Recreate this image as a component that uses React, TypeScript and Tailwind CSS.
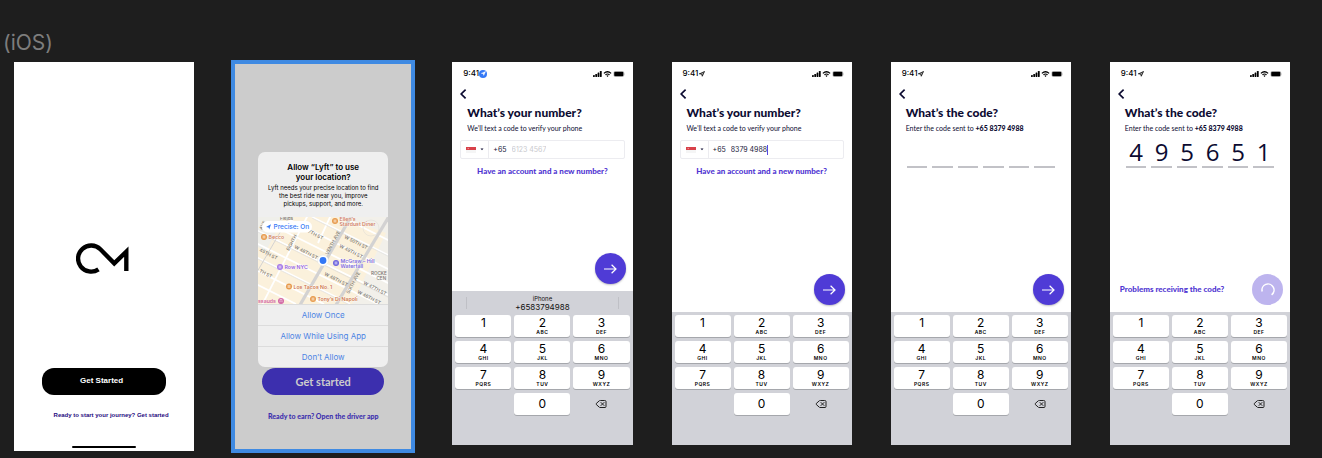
import type { ReactNode } from "react";
import { Delete, Navigation } from "lucide-react";

const INTER = "font-['Inter','Liberation_Sans',sans-serif]";
const LATO = "font-['Lato','Liberation_Sans',sans-serif]";
const OPEN = "font-['Open_Sans','Liberation_Sans',sans-serif]";
const ARIAL = "font-['Liberation_Sans',sans-serif]";

function Logo() {
  return (
    <svg viewBox="0 0 158 92" className="h-[31px] w-[53px]" role="img" aria-label="CM">
      <path
        d="M67 78.5 A39 39 0 1 1 72.6 18.4 L114 60.5 L150 25.5 V83"
        fill="none"
        stroke="#000"
        strokeWidth="13"
        strokeLinejoin="miter"
      />
    </svg>
  );
}

function StatusIcons() {
  return (
    <svg viewBox="0 0 32 6" className="h-[6px] w-[32px]" aria-hidden="true">
      <rect x="0" y="4" width="1.8" height="1.9" rx=".4" />
      <rect x="2.3" y="3" width="1.8" height="2.9" rx=".4" />
      <rect x="4.6" y="1.6" width="1.8" height="4.3" rx=".4" />
      <rect x="6.9" y=".1" width="1.8" height="5.8" rx=".4" />
      <path d="M10.9 2.4 Q14.5 -1 18.1 2.4" fill="none" stroke="#000" strokeWidth="1.3" />
      <path d="M12.4 3.9 Q14.5 2 16.6 3.9" fill="none" stroke="#000" strokeWidth="1.1" />
      <path d="M13.4 4.8 Q14.5 3.9 15.6 4.8 L14.5 6 Z" />
      <rect x="20.8" y=".3" width="10" height="5.4" rx="1.5" fill="none" stroke="#999" strokeWidth=".5" />
      <rect x="21.2" y=".7" width="9.2" height="4.6" rx="1" />
      <path d="M31.2 2.1 Q32 3 31.2 3.9 Z" fill="#999" />
    </svg>
  );
}

function StatusBar({ active }: { active?: boolean }) {
  return (
    <div className={`mt-[7px] flex h-[9px] items-center justify-between pr-[8px] pl-[11px] ${INTER}`}>
      <div className="flex items-center text-[8px] leading-[9px] font-medium text-black">
        9:41
        {active ? (
          <span className="flex size-[8px] items-center justify-center rounded-full bg-[#3478f6]">
            <Navigation className="size-[5px] fill-white text-white" />
          </span>
        ) : (
          <Navigation className="ml-px size-[6px] fill-neutral-400" strokeWidth={3} />
        )}
      </div>
      <StatusIcons />
    </div>
  );
}

function BackButton() {
  return (
    <button type="button" aria-label="Back" className="mt-[11px] ml-[8px] h-[10px] w-[7px]">
      <svg viewBox="0 0 7 10" className="h-[10px] w-[7px]">
        <path d="M5.6 .7 L1.2 5 L5.6 9.3" fill="none" stroke="#0c0b31" strokeWidth="1.7" />
      </svg>
    </button>
  );
}

type Key = [string, string];
const KEYS: Key[] = [
  ["1", ""],
  ["2", "ABC"],
  ["3", "DEF"],
  ["4", "GHI"],
  ["5", "JKL"],
  ["6", "MNO"],
  ["7", "PQRS"],
  ["8", "TUV"],
  ["9", "WXYZ"],
];
const KEY = "flex h-[22px] flex-col items-center rounded-[3px] bg-white text-black shadow-[0_1px_0_#a5a7ac]";

function Keypad({ suggestion }: { suggestion?: boolean }) {
  return (
    <div className={`bg-[#d1d2d8] pb-[27px] ${INTER}`}>
      {suggestion && (
        <div className="flex h-[21px] items-center justify-between px-[14px] pt-[3px]">
          <span className="h-[12px] w-px bg-[#bfc0c6]" />
          <button type="button" className="flex flex-col items-center text-[#111]">
            <span className="text-[6px] leading-[8px]">iPhone</span>
            <span className="text-[8px] leading-[9px]">+6583794988</span>
          </button>
          <span className="h-[12px] w-px bg-[#bfc0c6]" />
        </div>
      )}
      <div className="grid grid-cols-3 gap-x-[3px] gap-y-[4px] p-[3px]">
        {KEYS.map(([digit, letters]) => (
          <button type="button" key={digit} className={KEY}>
            <span className="mt-[1px] text-[12px] leading-[14px]">{digit}</span>
            <span className="text-[5px] leading-[5px] font-semibold tracking-widest">{letters}</span>
          </button>
        ))}
        <button type="button" className={`${KEY} col-start-2 justify-center`}>
          <span className="text-[12px] leading-[14px]">0</span>
        </button>
        <button type="button" aria-label="Delete" className="flex items-center justify-center text-[#222]">
          <Delete className="size-[12px]" strokeWidth={2} />
        </button>
      </div>
    </div>
  );
}

function Phone({ children }: { children: ReactNode }) {
  return <section className="flex min-h-[383px] min-w-[180px] flex-col bg-white">{children}</section>;
}

function Title({ title, children }: { title: string; children: ReactNode }) {
  return (
    <div className={`mt-[6px] pl-[15px] text-[#0c0b31] ${LATO}`}>
      <h2 className="text-[12px] leading-[16px] font-black">{title}</h2>
      <p className="mt-[3px] text-[7px] leading-[8px]">{children}</p>
    </div>
  );
}

function NextButton() {
  return (
    <button
      type="button"
      aria-label="Next"
      className="ml-auto flex size-[31px] shrink-0 items-center justify-center rounded-full bg-[#4f3bd6] shadow-[0_1px_2px_rgba(0,0,0,0.25)]"
    >
      <svg viewBox="0 0 14 10" className="h-[10px] w-[14px]" fill="none" stroke="#fff" strokeWidth="1.2">
        <path d="M1 5 H13 M8.6 .8 L13 5 L8.6 9.2" />
      </svg>
    </button>
  );
}

function NumberPhone({ id, value, suggestion }: { id: string; value?: string; suggestion?: boolean }) {
  return (
    <Phone>
      <StatusBar active={suggestion} />
      <BackButton />
      <Title title="What’s your number?">We’ll text a code to verify your phone</Title>
      <div className={`mx-[8px] mt-[8px] flex h-[19px] items-stretch rounded-[2px] border border-[#ececf0] ${INTER}`}>
        <button
          type="button"
          aria-label="Country code"
          className="flex w-[28px] items-center gap-[4px] border-r border-[#ececf0] pl-[5px]"
        >
          <svg viewBox="0 0 10 6" className="h-[6px] w-[10px]">
            <rect width="10" height="6" fill="#f5f5f5" />
            <rect width="10" height="3" fill="#d8414a" />
            <circle cx="2.2" cy="1.5" r=".6" fill="#f3b6ba" />
          </svg>
          <svg viewBox="0 0 4 3" className="h-[3px] w-[4px]">
            <path d="M.5 .4 H3.5 L2 2.2 Z" fill="#0c0b31" />
          </svg>
        </button>
        <label htmlFor={id} className="flex items-center pl-[4px] text-[7px] leading-[9px] text-[#20203a]">
          +65
        </label>
        <div className="flex min-w-0 flex-1 items-center pl-[5px]">
          <input
            id={id}
            type="tel"
            defaultValue={value}
            placeholder="6123 4567"
            className="field-sizing-content text-[7px] leading-[9px] text-[#20203a] outline-none placeholder:text-[#c9c9ce]"
          />
          {value && <span className="h-[10px] w-px bg-[#5a48e0]" />}
        </div>
      </div>
      <a href="#account" className={`mt-[8px] text-center text-[8px] leading-[9px] font-black text-[#4f35d2] ${LATO}`}>
        Have an account and a new number?
      </a>
      <div className="mt-auto flex px-[7px] pb-[7px]">
        <NextButton />
      </div>
      <Keypad suggestion={suggestion} />
    </Phone>
  );
}

function CodePhone({ code }: { code?: string }) {
  return (
    <Phone>
      <StatusBar />
      <BackButton />
      <Title title="What’s the code?">
        Enter the code sent to <b className="font-black">+65 8379 4988</b>
      </Title>
      <div className="mt-[7px] grid grid-cols-6 gap-[5px] px-[16px]">
        {[0, 1, 2, 3, 4, 5].map((i) => (
          <input
            key={i}
            aria-label={`Digit ${i + 1}`}
            inputMode="numeric"
            maxLength={1}
            defaultValue={code?.[i]}
            className={`h-[29px] w-full min-w-0 border-b-2 border-[#c2c2c7] pb-[3px] text-center text-[24px] leading-[24px] font-medium text-[#0c0b31] outline-none ${OPEN}`}
          />
        ))}
      </div>
      <div className="mt-auto flex items-center px-[7px] pb-[7px]">
        {code ? (
          <>
            <a href="#problems" className={`pl-[3px] text-[8px] leading-[9px] font-black text-[#4f35d2] ${LATO}`}>
              Problems receiving the code?
            </a>
            <button
              type="button"
              aria-label="Checking the code"
              className="ml-auto flex size-[31px] shrink-0 items-center justify-center rounded-full bg-[#bdb4ee]"
            >
              <svg viewBox="0 0 14 14" className="size-[14px]" fill="none" stroke="#fff" strokeWidth="1.5">
                <path d="M1.2 8.5 A6 6 0 1 1 10.6 11.8" />
              </svg>
            </button>
          </>
        ) : (
          <NextButton />
        )}
      </div>
      <Keypad />
    </Phone>
  );
}

const STREETS: [string, number, number, number][] = [
  ["W 50TH ST", 86, 21, 27],
  ["W 49TH ST", 81, 30, 27],
  ["W 47TH ST", 105, 67, 27],
  ["W 46TH ST", 99, 76, 27],
  ["W 48TH ST", 66, 58, 27],
  ["W 48TH ST", 36, 31, 27],
  ["47TH ST", 47, 14, 27],
  ["45TH ST", 1, 34, 27],
  ["TH ST", 1, 55, 27],
  ["EIGHTH", 31, 34, -62],
  ["VENTH AVE", 70, 38, -62],
  ["SIXTH AVE", 91, 77, -62],
];

type Place = { x: number; y: number; lines: string[]; color: string; dot: string };
const PLACES: Place[] = [
  { x: 77, y: 4, lines: ["Ellen’s", "Stardust Diner"], color: "#cf8062", dot: "#e79a4c" },
  { x: 6, y: 20, lines: ["Becco"], color: "#cf8062", dot: "#e79a4c" },
  { x: 22, y: 50, lines: ["Row NYC"], color: "#9563dc", dot: "#a477e8" },
  { x: 78, y: 46, lines: ["McGraw – Hill", "Waterfall"], color: "#7d68d8", dot: "#6c62de" },
  { x: 31, y: 69.5, lines: ["Los Tacos No. 1"], color: "#cf7648", dot: "#e79a4c" },
  { x: 55, y: 82, lines: ["Tony’s Di Napoli"], color: "#cf7648", dot: "#e79a4c" },
];

function CityMap() {
  return (
    <svg viewBox="0 0 130 87" className={`h-[87px] w-full ${INTER}`} preserveAspectRatio="xMidYMid slice">
      <rect width="130" height="87" fill="#f2f0ea" />
      <path d="M0 0 H84 L128 16 L94 87 H0 Z" fill="#fbf1dc" />
      <path d="M0 0 H26 L8 34 L0 30 Z" fill="#efefea" />
      <g stroke="#fff" strokeWidth="1.8" fill="none">
        <path d="M-4 12 L130 78 M-4 25 L120 87 M-4 39 L92 87 M-4 52 L66 87 M-4 66 L38 87 M22 12 L134 68 M26 0 L134 54 M54 0 L134 40 M84 0 L134 25" />
        <path d="M50 -2 L4 88 M73 -2 L60 26" />
      </g>
      <g stroke="#d3d2d2" fill="none">
        <path d="M94 -2 L42 88" strokeWidth="3.2" />
        <path d="M133 -4 L78 88" strokeWidth="3.2" />
        <path d="M31 0 L-1 55" strokeWidth="1" />
        <path d="M-2 14 L130 80 M-2 41 L92 88 M54 1 L132 40" strokeWidth=".5" />
      </g>
      <circle cx="113" cy="11" r="8" fill="none" stroke="#dcdad5" strokeWidth=".5" />
      <g fontSize="4.6" fontWeight="500" fill="#77736e">
        {STREETS.map(([name, x, y, angle]) => (
          <text key={`${name}${x}`} transform={`translate(${x} ${y}) rotate(${angle})`}>
            {name}
          </text>
        ))}
        <text x="22" y="3">Fields</text>
        <text x="113" y="58">ROCKE</text>
        <text x="118.5" y="62.5">CEN</text>
        <text transform="translate(4 13) rotate(-62)">AVE</text>
      </g>
      {PLACES.map(({ x, y, lines, color, dot }) => (
        <g key={lines[0]}>
          <circle cx={x} cy={y} r="3" fill={dot} />
          <path d={`M${x - 0.8} ${y - 1.5} V${y + 1.5} M${x + 0.8} ${y - 1.5} V${y + 1.5}`} stroke="#fff" strokeWidth=".7" />
          <text fontSize="5.2" fontWeight="600" fill={color} stroke="#fff" strokeWidth=".6" paintOrder="stroke">
            {lines.map((line, i) => (
              <tspan key={line} x={x + 4.5} y={y + (lines.length > 1 ? i * 5 - 0.2 : 2)}>
                {line}
              </tspan>
            ))}
          </text>
        </g>
      ))}
      <text x="0" y="86" fontSize="5.2" fontWeight="600" fill="#d267a5">
        ssauds
      </text>
      <circle cx="23" cy="84" r="3" fill="#d267a5" />
      <path d="M21.8 82.6 H24.2 M22 83.4 V85.2 M24 83.4 V85.2" stroke="#fff" strokeWidth=".6" />
      <circle cx="65" cy="43.5" r="5.4" fill="#fff" stroke="#ddd" strokeWidth=".4" />
      <circle cx="65" cy="43.5" r="3.4" fill="#3478f6" />
      <rect x="4" y="4" width="50" height="11.5" rx="5.7" fill="#fff" />
      <path d="M8 10 L13 7.2 L11.2 12.4 L10.6 10.4 Z" fill="#3478f6" />
      <text x="15.5" y="12" fontSize="6.5" fontWeight="500" fill="#3478f6">
        Precise: On
      </text>
    </svg>
  );
}

function WelcomePhone() {
  return (
    <section className={`flex min-h-[389px] min-w-[180px] flex-col items-center bg-white pt-[181px] ${ARIAL}`}>
      <div className="pr-[3px]">
        <Logo />
      </div>
      <button
        type="button"
        className="mt-[94px] h-[27px] w-[124px] rounded-[12px] bg-black pr-[5px] pb-[2px] text-[8px] leading-[10px] font-bold text-white"
      >
        Get Started
      </button>
      <a href="#start" className="mt-[16px] ml-[14px] text-[6px] leading-[9px] font-bold text-[#1f0a80]">
        Ready to start your journey? Get started
      </a>
      <div className="mt-auto mb-[3px] h-[2px] w-[64px] rounded-full bg-black" />
    </section>
  );
}

function LocationPhone() {
  return (
    <section className="flex min-h-[389px] min-w-[180px] flex-col items-center bg-[#ccc] pt-[90px] outline-4 -outline-offset-2 outline-[#3f8ae2]">
      <div
        role="dialog"
        aria-labelledby="location-title"
        className={`w-[130px] overflow-hidden rounded-[7px] bg-[#efefef] pt-[10px] text-center text-black ${INTER}`}
      >
        <h2 id="location-title" className="text-[8px] leading-[10px] font-semibold">
          Allow “Lyft” to use
          <br />
          your location?
        </h2>
        <p className="mt-[2px] mb-[9px] text-[6px] leading-[8px]">
          Lyft needs your precise location to find
          <br />
          the best ride near you, improve
          <br />
          pickups, support, and more.
        </p>
        <CityMap />
        {["Allow Once", "Allow While Using App", "Don’t Allow"].map((label) => (
          <button
            type="button"
            key={label}
            className="block h-[21px] w-full border-t border-[#dcdcdc] text-[8px] leading-[10px] text-[#4c84e4]"
          >
            {label}
          </button>
        ))}
      </div>
      <button
        type="button"
        className={`mt-px h-[27px] w-[122px] rounded-full bg-[#3c2fae] text-[11px] leading-[14px] font-bold text-[#ccc] ${LATO}`}
      >
        Get started
      </button>
      <a href="#driver" className={`mt-[17px] text-[7px] leading-[9px] font-black text-[#3c2fae] ${LATO}`}>
        Ready to earn? Open the driver app
      </a>
    </section>
  );
}

export default function App() {
  return (
    <main className="min-h-screen overflow-x-auto bg-[#1e1e1e]">
      <h1 className={`pt-[29px] pl-[3px] text-[21px] leading-[28px] text-[#7d7d7d] ${INTER}`}>(iOS)</h1>
      <div className="mt-[5px] grid grid-cols-6 items-start gap-x-[39px] pr-[32px] pl-[14px]">
        <WelcomePhone />
        <LocationPhone />
        <NumberPhone id="phone-empty" suggestion />
        <NumberPhone id="phone-filled" value="8379 4988" />
        <CodePhone />
        <CodePhone code="495651" />
      </div>
    </main>
  );
}
